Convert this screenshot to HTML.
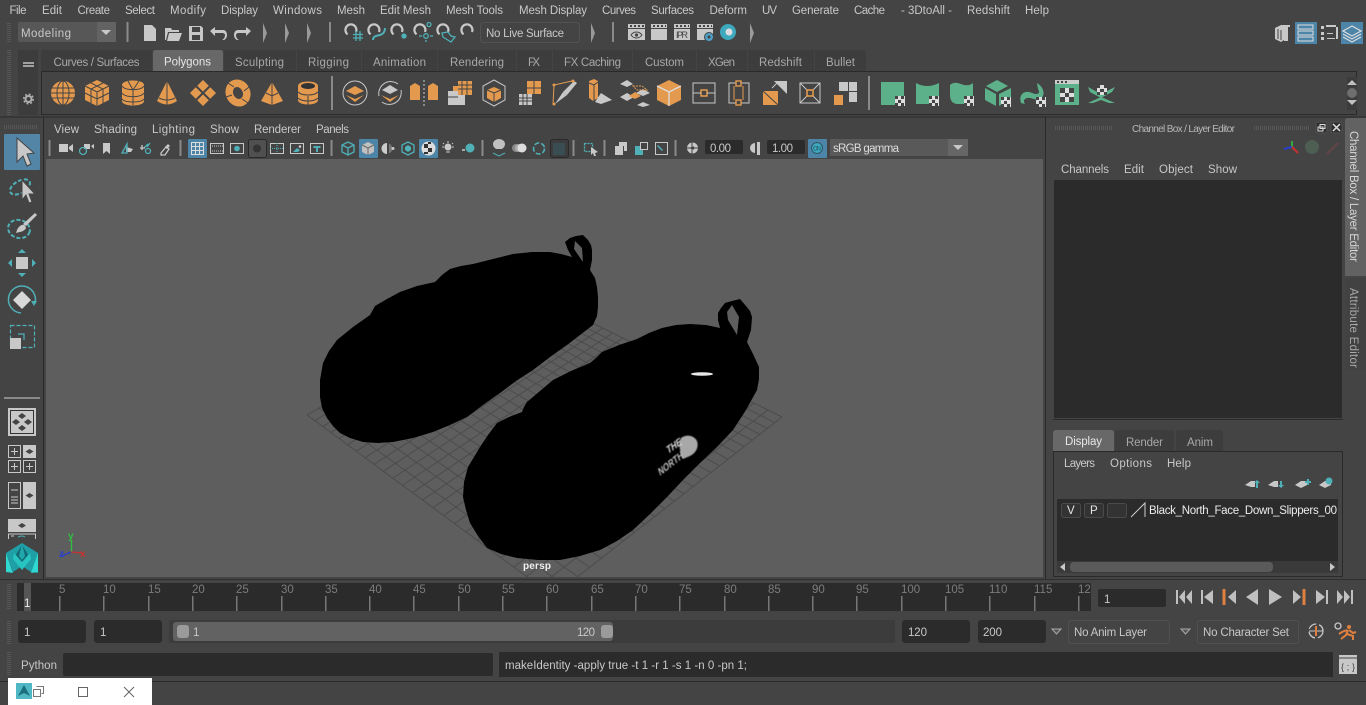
<!DOCTYPE html>
<html><head><meta charset="utf-8"><title>Maya</title>
<style>
html,body{margin:0;padding:0;background:#444;width:1366px;height:705px;overflow:hidden}
svg{display:block;font-family:"Liberation Sans",sans-serif;font-size:11.5px}
.m{fill:#c8c8c8}.d{fill:#a8a8a8}.w{fill:#e6e6e6}.g{fill:#c8c8c8}.o{fill:#e39a4f}.gr{fill:#5cb08a}
.l{stroke:#444;stroke-width:1;fill:none}.t{fill:none;stroke:#4fb0b8;stroke-width:1.6}.s{fill:none;stroke:#c8c8c8;stroke-width:1.3}
.dt{stroke:#6a6a6a;stroke-width:1;stroke-dasharray:1 1;fill:none}
.sep{stroke:#8a8a8a;stroke-width:2}
</style></head><body>
<svg width="1366" height="705" viewBox="0 0 1366 705" xmlns="http://www.w3.org/2000/svg">
<defs><filter id="bl" x="-20%" y="-20%" width="140%" height="140%"><feGaussianBlur stdDeviation="0.6"/></filter></defs>
<rect width="1366" height="705" fill="#444"/>
<!-- menu -->
<g class="m">
<text x="9.5" y="14" textLength="17">File</text><text x="42" y="14" textLength="20">Edit</text><text x="77.5" y="14" textLength="32.5">Create</text><text x="125" y="14" textLength="30">Select</text><text x="170" y="14" textLength="36">Modify</text><text x="221" y="14" textLength="37">Display</text><text x="273" y="14" textLength="49">Windows</text><text x="337" y="14" textLength="28">Mesh</text><text x="380" y="14" textLength="51">Edit Mesh</text><text x="446" y="14" textLength="57">Mesh Tools</text><text x="519" y="14" textLength="68">Mesh Display</text><text x="602" y="14" textLength="34">Curves</text><text x="651" y="14" textLength="43">Surfaces</text><text x="709.5" y="14" textLength="37.5">Deform</text><text x="762" y="14" textLength="15">UV</text><text x="792" y="14" textLength="47">Generate</text><text x="854" y="14" textLength="31">Cache</text><text x="901" y="14" textLength="51">- 3DtoAll -</text><text x="967" y="14" textLength="43">Redshift</text><text x="1025" y="14" textLength="24">Help</text>
</g>
<!-- row 2 -->
<path class="dt" d="M8 23V42M10 23V42M8 50V115M10 50V115"/>
<rect x="18" y="22" width="98" height="20" rx="2" fill="#575757"/><rect x="97" y="22" width="19" height="20" rx="1" fill="#636363"/>
<path d="M101 30h10l-5 5z" fill="#c8c8c8"/>
<text x="21" y="37" class="m" textLength="50">Modeling</text>
<path class="sep" d="M127.500 22V42M330 22V42M613 22V42"/>
<g class="g">
<path d="M144 25h8l4 4v12h-12z"/>
<path d="M165 31v-3h6l1 2h7v2h-11l-2 8h-1zM169 33h13l-3 8h-12z"/>
<path d="M189 26h12l2 2v13h-14zM192 27v5h8v-5zM192 35v5h8v-5z"/>
<path d="M210 31l5-4v3h8c3 0 4 3 4 5s-1 4-3 5h-2c2-1 3-3 3-5 0-1-1-2-3-2h-7v3z"/>
<path d="M251 31l-5-4v3h-8c-3 0-4 3-4 5s1 4 3 5h2c-2-1-3-3-3-5 0-1 1-2 3-2h7v3z"/>
<path d="M263 23l4 10-4 10zM285 23l4 10-4 10zM307 23l4 10-4 10zM591 23l4 10-4 10zM750 23l4 10-4 10z" fill="#9a9a9a"/>
</g>
<g fill="none" stroke="#c8c8c8" stroke-width="2.200">
<path d="M347.600 34.300A5.500 5.500 0 1 1 356 32"/><path d="M370.600 34.300A5.500 5.500 0 1 1 379 32"/><path d="M393.600 34.300A5.500 5.500 0 1 1 402 32"/><path d="M416.600 34.300A5.500 5.500 0 1 1 425 32"/><path d="M439.600 34.300A5.500 5.500 0 1 1 448 32"/><path d="M463.600 34.300A5.500 5.500 0 1 1 472 32"/>
</g>
<g fill="none" stroke="#4fb0b8" stroke-width="1.300">
<path d="M353 34.500h10M353 38h10M356 31v10M360 31v10"/><path d="M373 40c0-4 3-4 7-5 3-1 5-3 5-7" stroke-width="2"/><circle cx="404" cy="36" r="2" fill="#4fb0b8"/><circle cx="429" cy="24.500" r="2"/><circle cx="426" cy="36" r="2.300"/><path d="M419 36h3M430 36h3M426 40v2"/><path d="M442 33l6-1 3 4 4 1-4 5-8-5z"/>
</g>
<rect x="480.500" y="22.500" width="99" height="20" rx="3" fill="#444" stroke="#525252"/>
<text x="486" y="37" class="m" textLength="78">No Live Surface</text>
<g class="g">
<path d="M628 24h17v4h-17zM628 29h17v11h-17z"/><path d="M651 24h16v4h-16zM651 29h16v11h-16z"/><path d="M674 24h16v4h-16zM674 29h16v11h-16z"/><path d="M697 24h16v4h-16zM697 29h16v11h-16z"/>
</g>
<path d="M630 26h2M634 26h2M638 26h2M642 26h2M653 26h2M657 26h2M661 26h2M665 26h1M676 26h2M680 26h2M684 26h2M688 26h1M699 26h2M703 26h2M707 26h2M711 26h1" stroke="#444" stroke-width="2"/>
<path d="M631 35c3-4 8-4 11 0-3 4-8 4-11 0z" fill="none" stroke="#444"/><circle cx="636.500" cy="35" r="1.600" fill="#444"/>
<text x="676" y="38" font-size="9" fill="#444" textLength="12">IPR</text>
<circle cx="709" cy="37" r="4.500" fill="#4fa0c8" stroke="#444"/><circle cx="709" cy="37" r="1.500" fill="#444"/>
<circle cx="728" cy="32" r="8" fill="#3ea9bd"/><circle cx="729" cy="32" r="3.500" fill="#ddd"/>
<!-- top-right layout -->
<path d="M1275 28l6-3h9v2h-2v14h-4v-1l-3 2-6-3z" fill="#c8c8c8"/><path class="l" d="M1278 29v10M1281 30v10"/>
<rect x="1295" y="22" width="22" height="22" fill="#4d85a8"/>
<path d="M1298 25h15v4h-15zM1298 31h15v4h-15zM1298 37h15v4h-15z" fill="none" stroke="#ddd"/>
<path d="M1321 26h3v3h-3zM1321 32h3v3h-3zM1321 37h3v3h-3zM1326 27h12v-2h-12zM1327 33h6v1h-6zM1327 38h8v1h-8zM1336 25h2v14h-2z" fill="#c8c8c8"/>
<rect x="1341" y="22" width="22" height="22" fill="#4d85a8"/>
<path d="M1352 26l9 5-9 5-9-5zM1343 34l9 5 9-5M1343 37l9 5 9-5" fill="none" stroke="#ddd" stroke-width="1.200"/>
<!-- shelf tabs -->
<rect x="18" y="50" width="20" height="65" fill="#3c3c3c"/>
<rect x="23" y="62" width="11" height="2" fill="#a0a0a0"/><rect x="23" y="65" width="11" height="2" fill="#a0a0a0"/>
<circle cx="28.500" cy="99" r="3" fill="none" stroke="#b0b0b0" stroke-width="2"/><circle cx="28.500" cy="99" r="4.800" fill="none" stroke="#b0b0b0" stroke-width="1.400" stroke-dasharray="2 1.770"/>
<g fill="#3d3d3d">
<path d="M41 71V53q0-3 3-3h108v21zM224 71V50h72v21zM297 71V50h64v21zM362 71V50h75v21zM438 71V50h78v21zM517 71V50h35v21zM553 71V50h79v21zM633 71V50h63v21zM697 71V50h50v21zM748 71V50h66v21zM815 71V50h48q3 0 3 3v18z"/>
</g>
<path d="M153 71V53q0-3 3-3h64q3 0 3 3v18z" fill="#686868"/>
<g class="d">
<text x="53.500" y="66" textLength="86">Curves / Surfaces</text><text x="235" y="66" textLength="49">Sculpting</text><text x="308" y="66" textLength="41">Rigging</text><text x="373" y="66" textLength="53">Animation</text><text x="450" y="66" textLength="54">Rendering</text><text x="528" y="66" textLength="12">FX</text><text x="564" y="66" textLength="57">FX Caching</text><text x="645" y="66" textLength="39">Custom</text><text x="708" y="66" textLength="27">XGen</text><text x="759" y="66" textLength="43">Redshift</text><text x="826" y="66" textLength="29">Bullet</text>
</g>
<text x="164" y="65.500" class="w" textLength="47">Polygons</text>
<rect x="41.500" y="71.500" width="1315" height="43" fill="#444" stroke="#2a2a2a"/>
<rect x="1347" y="77" width="10" height="33" fill="#3c3c3c"/>
<path d="M1347 85l5-5 5 5zM1347 100l5 5 5-5z" fill="#c0c0c0"/><circle cx="1352" cy="93" r="5" fill="#6e6e6e"/>
<!-- shelf icons orange -->
<g transform="translate(63 93)"><circle r="12" class="o"/><path class="l" d="M-12 0h24M-11-5h22M-11 5h22"/><ellipse rx="6" ry="12" class="l"/><path class="l" d="M0-12V12"/></g>
<g transform="translate(97 93)"><path class="o" d="M0-13 12-7V7L0 13-12 7V-7z"/><path class="l" d="M-12-7 0-1 12-7M0-1V13M-6-10 6-4V10M6-10-6-4V10M-12 0 0 6 12 0"/></g>
<g transform="translate(133 93)"><path class="o" d="M-11-8C-11-14 11-14 11-8V8C11 14-11 14-11 8z"/><path class="l" d="M-11-7C-8-2 8-2 11-7M-11 0C-8 5 8 5 11 0M-11 6C-8 10 8 10 11 6M0-3V12M0-3-5-12M0-3 6-12"/></g>
<g transform="translate(167 93)"><path class="o" d="M0-12 10 8Q0 15-10 8z"/><path class="l" d="M0-12V12M-8 5Q0 9 8 5"/></g>
<g transform="translate(203 93)"><path class="o" d="M0-13 13 0 0 13-13 0z"/><path d="M-7-7 7 7M7-7-7 7" stroke="#444" stroke-width="2"/></g>
<g transform="translate(238 93)"><ellipse rx="8.500" ry="10" fill="none" stroke="#e39a4f" stroke-width="7.500" transform="rotate(-25)"/><path class="l" d="M-4-6-10-10M4 6 10 10M-6 2-12 4M6-2 11-6"/></g>
<g transform="translate(272 93)"><path class="o" d="M0-11 11 8 0 12-11 8z"/><path class="l" d="M0-11V12M-6 0 0 3 6 0"/></g>
<g transform="translate(308 93)"><path class="o" d="M-10-7C-10-13 10-13 10-7V7C10 13-10 13-10 7z"/><ellipse cy="-7" rx="7" ry="3" fill="#333"/><path class="l" d="M-10-1C-6 3 6 3 10-1M-10 5C-6 9 6 9 10 5M0 3V12"/></g>
<rect x="331" y="76" width="2" height="34" fill="#8a8a8a"/>
<g transform="translate(355 93)"><circle r="12" fill="none" stroke="#c8c8c8"/><path class="o" d="M0-7 9-2 0 2-9-2z"/><path class="o" d="M-9 2 0 6 9 2 0 9z"/></g>
<g transform="translate(390 93)"><path d="M-11 3A12 12 0 0 1 8-9M11-3A12 12 0 0 1-8 9" fill="none" stroke="#c8c8c8"/><path class="g" d="M0-8 8-3 0 1-8-3z"/><path class="o" d="M-9 2 0 6 9 2 0 9z"/></g>
<g transform="translate(424 93)"><path class="o" d="M-14-7-9-10-4-7V7H-14zM4-7 9-10 14-7V7H4z"/><path d="M0-13V13" stroke="#ccc" stroke-dasharray="2 2"/></g>
<g transform="translate(460 93)"><path class="o" d="M-2-12H12V2H-2z"/><path class="o" d="M-7-7H-2V-2H-7z"/><path class="g" d="M-12-2H-2V12H-12zM-2 2H5V12H-2z"/><path class="l" d="M-2-8H12M-2-4H12M2-12V2M7-12V2M-12 4H-2"/></g>
<g transform="translate(494 93)"><path d="M0-13 11-7V7L0 13-11 7V-7z" fill="none" stroke="#c8c8c8"/><path class="o" d="M0-6 7-3V5L0 9-7 5V-3z"/><path class="l" d="M-7-3 0 0 7-3M0 0V9"/></g>
<g transform="translate(530 93)"><path class="o" d="M-3-12H11V1H-3z"/><path class="o" d="M-3-3H2V1H-3z"/><path d="M4-12V1M-3-5H11" stroke="#444"/><path d="M-11 1H2V12H-11z" fill="#c8c8c8"/><path d="M-11 5H2M-11 8H2M-7 1V12M-3 1V12" stroke="#444"/></g>
<g transform="translate(565 93)"><path d="M-12 12-11-8 7-12" fill="none" stroke="#e39a4f"/><path class="g" d="M12-10 2 2-2-1 9-12z"/><path class="g" d="M-10 11 2 2-2-1z"/><circle cx="-11" cy="-8" r="1.500" class="o"/><circle cx="-11" cy="11" r="1.500" class="o"/><circle cx="8" cy="-12" r="1.500" class="o"/></g>
<g transform="translate(600 93)"><path class="o" d="M-11-12-6-14-2-12V5L-7 8-11 5z"/><path class="l" d="M-11-10-6-8-2-11M-6-8V8"/><path class="g" d="M1 0 12 7 1 11-5 9z"/></g>
<g transform="translate(635 93)"><path class="g" d="M-8-13-2-9-8-6-15-9zM8-4 15 0 8 3 1 0zM-8 0-1 4-8 8-15 4zM8 9 15 12 8 14 2 12z"/><path class="o" d="M0-1 6 3 0 6-6 3z"/><path d="M-2-7H7L12-3H2z" fill="none" stroke="#e39a4f" stroke-dasharray="2 1"/></g>
<g transform="translate(669 93)"><path class="o" d="M0-13 12-7V7L0 13-12 7V-7z"/><path d="M-12-7 0-1 12-7M0-1V13" stroke="#ddd" stroke-width="1.300" fill="none"/></g>
<g transform="translate(704 93)"><rect x="-11" y="-10" width="22" height="20" fill="none" stroke="#c8c8c8"/><rect x="-3" y="-3" width="6" height="6" fill="none" stroke="#e39a4f" stroke-width="1.500"/><path d="M-11 0H-3M3 0H11" stroke="#c8c8c8"/></g>
<g transform="translate(739 93)"><rect x="-10" y="-10" width="20" height="20" fill="none" stroke="#c8c8c8"/><rect x="-3" y="-12" width="5" height="5" fill="#444" stroke="#e39a4f" stroke-width="1.400"/><rect x="-3" y="7" width="5" height="5" fill="#444" stroke="#e39a4f" stroke-width="1.400"/><path d="M-5-7V7M4-7V7" stroke="#e39a4f"/></g>
<g transform="translate(775 93)"><path class="o" d="M-12-2V12H3V-2z"/><path d="M-12-2 3 12" stroke="#444"/><path class="g" d="M-1-12H12V1z"/><path d="M-3-5 3-11" stroke="#c8c8c8"/></g>
<g transform="translate(810 93)"><rect x="-10" y="-10" width="20" height="20" fill="none" stroke="#c8c8c8"/><path d="M-10-10-3-3M10-10 3-3M-10 10-3 3M10 10 3 3" stroke="#c8c8c8"/><rect x="-3" y="-3" width="6" height="6" fill="none" stroke="#e39a4f" stroke-width="1.600"/></g>
<g transform="translate(845 93)"><path class="g" d="M-6-11H3V-2H-6zM4-11H12V-2H4zM4-1H12V9H4z"/><path class="o" d="M-11 2H-2V12H-11z"/></g>
<rect x="868" y="76" width="2" height="34" fill="#8a8a8a"/>
<!-- green -->
<g class="gr"><path d="M881 82h23v23h-23z"/><path d="M916 83q11 6 23 0v21h-23z"/><path d="M950 85q4-4 11-1 7 3 12-1v14c0 6-3 7-8 7h-7c-6 0-8-4-8-9z"/><path d="M997 80l11 6-11 6-11-6z"/><path d="M985 88l11 6v12l-11-6zM1011 88l-12 6v12l12-6z"/><path d="M1021 103c-3-10 5-13 11-10 5 2 9 1 6-4l-1-6c7 4 9 13 3 16-5 2-8-2-13-1-3 1-4 3-2 6z"/><path d="M1055 84h24v21h-24z"/><path d="M1088 87l13 7 14-7-3 5-11 6-11-6zM1088 103l13-6 14 6h-6l-8-3-8 3z"/></g>
<path d="M1055 80h24v4h-24z" fill="#ccc"/><path d="M1057 81h2v2h-2zM1061 81h2v2h-2zM1065 81h2v2h-2z" fill="#444"/>
<g fill="#ddd"><path d="M895 96h10v10h-10z"/><path d="M929 96h10v10h-10zM964 96h10v10h-10zM1001 97h10v10h-10zM1036 97h10v10h-10zM1060 88h14v14h-14zM1097 85h10v10h-10z"/></g>
<g fill="#444"><path d="M895 96h3v3h-3zM901 96h3v3h-3zM898 100h3v3h-3zM895 103h3v3h-3zM901 103h3v3h-3zM929 96h3v3h-3zM935 96h3v3h-3zM932 100h3v3h-3zM929 103h3v3h-3zM935 103h3v3h-3zM964 96h3v3h-3zM970 96h3v3h-3zM967 100h3v3h-3zM964 103h3v3h-3zM970 103h3v3h-3zM1001 97h3v3h-3zM1007 97h3v3h-3zM1004 101h3v3h-3zM1001 104h3v3h-3zM1007 104h3v3h-3zM1036 97h3v3h-3zM1042 97h3v3h-3zM1039 101h3v3h-3zM1036 104h3v3h-3zM1042 104h3v3h-3zM1060 88h5v5h-5zM1069 88h5v5h-5zM1065 93h4v4h-4zM1060 97h5v5h-5zM1069 97h5v5h-5zM1097 85h3v3h-3zM1104 85h3v3h-3zM1100 89h4v3h-4zM1097 92h3v3h-3zM1104 92h3v3h-3z"/></g>
<!-- panel lines -->
<rect x="0" y="116.500" width="1366" height="1" fill="#2a2a2a"/>
<rect x="43" y="117" width="1" height="463" fill="#2a2a2a"/><rect x="1045" y="117" width="1" height="463" fill="#2a2a2a"/>
<!-- viewport menu -->
<path class="dt" d="M4 126H38M4 128H38"/>
<g class="m"><text x="54" y="133" textLength="25">View</text><text x="94" y="133" textLength="43">Shading</text><text x="152" y="133" textLength="43">Lighting</text><text x="210" y="133" textLength="29">Show</text><text x="254" y="133" textLength="47">Renderer</text><text x="316" y="133" textLength="33">Panels</text></g>
<!-- view toolbar -->
<path class="sep" d="M49.500 140V156M180.500 140V156M331.500 140V156M482.500 140V156M573.500 140V156M604.500 140V156M675.500 140V156"/>
<rect x="188" y="139" width="19" height="19" rx="1" fill="#4d85a8"/><rect x="359" y="139" width="19" height="19" rx="1" fill="#4d85a8"/><rect x="419" y="139" width="19" height="19" rx="1" fill="#4d85a8"/>
<rect x="248.500" y="139.500" width="18" height="18" rx="2" fill="#505050" stroke="#2a2a2a"/><rect x="550.500" y="139.500" width="18" height="18" rx="2" fill="#3c3c3c" stroke="#2a2a2a"/>
<g fill="#c8c8c8">
<path d="M59 144h9v8h-9zM69 147l4-3v8l-4-3z"/><path d="M84 144h6v5h-6zM91 146l3-2v5z"/><path d="M103 143h7v11l-3.500-3-3.500 3z"/><path d="M119 155h14M126 147l7 2-2 3h-5z"/>
</g>
<g fill="none" stroke="#4fb0b8" stroke-width="1.300"><circle cx="83" cy="151" r="3.500"/><circle cx="148" cy="151" r="2.500"/><path d="M144 148l4-4M147 147l3-4" /><path d="M122 153l5-9v9z"/></g>
<path d="M140 148h5M142 145v5M161 153l5-6 3 2-4 6h-4z" fill="none" stroke="#c8c8c8" stroke-width="1.300"/>
<path d="M168 144l2 2-3 3-2-2z" fill="#c8c8c8"/>
<rect x="191.500" y="142.500" width="12" height="12" fill="none" stroke="#ddd"/><path d="M191 146.500h12M191 150.500h12M195.500 142v12M199.500 142v12" stroke="#ddd"/>
<rect x="210.500" y="143.500" width="13" height="10" fill="none" stroke="#c8c8c8"/><path d="M210 146h14M210 151h14" stroke="#c8c8c8" stroke-dasharray="1 1"/>
<rect x="230.500" y="143.500" width="13" height="10" fill="none" stroke="#c8c8c8"/><circle cx="237" cy="148.500" r="2.800" fill="#4fb0b8"/>
<circle cx="257" cy="148.500" r="4" fill="#333"/>
<rect x="270.500" y="143.500" width="13" height="10" fill="none" stroke="#c8c8c8"/><path d="M277 143v10M270 148.500h14" stroke="#4fb0b8" stroke-dasharray="1 1"/>
<rect x="290.500" y="143.500" width="13" height="10" fill="none" stroke="#c8c8c8"/><path d="M293 152l4-4 3 2-2 2z" fill="#4fb0b8"/><circle cx="300" cy="146.500" r="1.300" fill="#ccc"/>
<rect x="310.500" y="143.500" width="13" height="10" fill="none" stroke="#c8c8c8"/><path d="M313.500 146h7v2h-2.500v4h-2v-4h-2.500z" fill="#4fb0b8"/>
<path d="M348 142l6 3v7l-6 3-6-3v-7zM342 145l6 3 6-3M348 148v7" fill="none" stroke="#4fb0b8" stroke-width="1.300"/>
<path d="M368 142l6 3v7l-6 3-6-3v-7z" fill="#c0c0c0"/><path d="M362 145l6 3 6-3M368 148v7" fill="none" stroke="#666"/>
<path d="M387 143a5.500 5.500 0 0 0 0 11z" fill="#ccc"/><path d="M389 143.500a5.500 5.500 0 0 1 0 10z" fill="#777"/><circle cx="393" cy="148.500" r="1.500" fill="#ccc"/>
<path d="M408 142l6 3v7l-6 3-6-3v-7z" fill="none" stroke="#4fb0b8" stroke-width="1.300"/><path d="M408 145l3 2v3l-3 2-3-2v-3z" fill="#4fb0b8"/>
<circle cx="428.500" cy="148.500" r="7" fill="#ddd"/><path d="M424 144h4v4h-4zM428 148h4v4h-4zM428 142h3v2h-3zM424 152h4v2h-4z" fill="#333"/>
<circle cx="448" cy="147" r="3.500" fill="#c8c8c8"/><path d="M446 152h4M448 141v2M442 147h2M452 147h2M443 143l1 1M453 143l-1 1" stroke="#c8c8c8"/>
<path d="M462 150h3" stroke="#aaa" stroke-width="2"/><circle cx="470" cy="148" r="4.500" fill="#4fb0b8"/>
<path d="M493 144a6 5 0 0 1 12 0c0 3-2 4-3 5h-6c-1-1-3-2-3-5z" fill="#c0c0c0"/><path d="M493 153l6 3 6-3" fill="none" stroke="#4fb0b8"/>
<circle cx="516" cy="148" r="4" fill="#888"/><circle cx="519" cy="148" r="4" fill="#aaa"/><circle cx="522" cy="148" r="4.500" fill="#ddd"/>
<circle cx="539" cy="148.500" r="5.500" fill="none" stroke="#4fb0b8" stroke-width="1.600" stroke-dasharray="5 2"/>
<path d="M553 143h12v12h-12z" fill="#3a4d52"/>
<rect x="584.500" y="143.500" width="8" height="8" fill="none" stroke="#4fb0b8" stroke-dasharray="2 1" stroke-width="1.300"/><path d="M591 147l7 5-3 1 1 3-2 0-1-3-2 2z" fill="#c8c8c8"/>
<path d="M615 146h8v9h-8zM619 142h8v9h-3v-5h-5z" fill="#c8c8c8"/>
<path d="M635 146h8v9h-8z" fill="#4fb0b8"/><rect x="640.500" y="142.500" width="7" height="7" fill="#444" stroke="#c8c8c8"/>
<rect x="655.500" y="142.500" width="12" height="12" fill="none" stroke="#c8c8c8"/><path d="M658 145l5 5-1 1-5-5z" fill="#4fb0b8"/>
<circle cx="692.500" cy="148" r="5.500" fill="#c8c8c8"/><circle cx="692.500" cy="148" r="1.800" fill="#444"/><path d="M692 142v4M698 148h-4M692 154v-4M687 148h4" stroke="#444"/>
<rect x="705" y="140" width="38" height="14" rx="2" fill="#2b2b2b"/><text x="710" y="152" class="m" textLength="21">0.00</text>
<path d="M755 143a5 5 0 0 0 0 10z" fill="#c8c8c8"/><path d="M757 142h3v13h-3z" fill="#c8c8c8"/>
<rect x="767" y="140" width="38" height="14" rx="2" fill="#2b2b2b"/><text x="772" y="152" class="m" textLength="21">1.00</text>
<rect x="808" y="139" width="19" height="19" rx="1" fill="#4d85a8"/><circle cx="817" cy="148" r="5.500" fill="#3ea9bd" stroke="#2f5468"/><text x="813" y="150.500" font-size="6" fill="#24505f" textLength="8">ON</text>
<rect x="830" y="139" width="120" height="17" rx="1" fill="#595959"/><rect x="948" y="139" width="20" height="17" rx="1" fill="#666"/><path d="M953 145h10l-5 5z" fill="#c8c8c8"/>
<text x="833" y="152" fill="#dcdcdc" textLength="66">sRGB gamma</text>
<!-- viewport -->
<rect x="46" y="159" width="997" height="418" fill="#5e5e5e"/>
<clipPath id="vp"><rect x="46" y="159" width="997" height="418"/></clipPath>
<g clip-path="url(#vp)">
<g id="grid" stroke="#4c4c4c" stroke-width="1" fill="none"></g>
<polygon fill="#000" points="320,397 320,380 323,363 329,351 337,340 353,327 370,315 375,306 387,299 400,292 417,286 435,282 442,275 450,269 461,266 473,264 493,259 513,254 532,252 550,252 561,254 572,257 568,250 565,242 570,238 576,236 583,235 588,240 591,245 592,250 592,260 590,270 595,278 597,287 598,297 598,307 597,316 593,325 580,335 567,345 550,357 533,370 516,381 500,393 483,405 467,417 450,425 433,432 413,438 393,442 378,443 363,442 350,438 340,433 333,426 327,418 322,408"/>
<polygon fill="#5e5e5e" points="575,241 582,248 583,262 574,249"/>
<polygon fill="#000" points="463,497 464,482 468,467 474,457 480,447 488,435 497,423 509,417 522,412 524,407 527,402 540,391 553,380 571,371 590,363 596,358 602,352 619,345 637,339 649,333 662,328 676,325 690,324 706,325 720,328 718,320 718,313 721,308 725,303 732,301 740,299 746,306 750,311 752,317 751,330 747,342 753,354 759,367 759,379 757,390 746,410 733,430 717,447 700,463 683,480 667,497 650,514 633,530 617,541 600,550 580,556 560,560 538,560 517,558 501,554 487,548 478,536 470,523 466,510"/>
<polygon fill="#5e5e5e" points="732,305 739,317 737,335 728,320 727,312"/>
<ellipse cx="702" cy="374" rx="11" ry="1.800" fill="#e8e8e8"/>
<g filter="url(#bl)">
<path d="M681 438C686 434 694 435 697 441C699 447 696 453 690 456L683 459C680 452 678 444 681 438Z" fill="#a8a8a8"/>
<text transform="translate(668 454) rotate(-35) skewX(-20)" font-size="10" font-weight="bold" fill="#e0e0e0" textLength="17" lengthAdjust="spacingAndGlyphs">THE</text>
<text transform="translate(660 476) rotate(-38) skewX(-18)" font-size="10" font-weight="bold" fill="#c0c0c0" textLength="30" lengthAdjust="spacingAndGlyphs">NORTH</text>
</g>
<text x="523" y="569" font-size="10" font-weight="bold" fill="#eee" textLength="28">persp</text>
</g>
<!-- axis -->
<path d="M71.500 552V540" stroke="#2fc040" stroke-width="1.300"/><path d="M71 552 82 553" stroke="#c83030" stroke-width="1.300"/><path d="M71 552 62 556" stroke="#2a3fd0" stroke-width="1.300"/>
<text x="68" y="539" font-size="10" font-weight="bold" fill="#2fc040">y</text><text x="80" y="557" font-size="10" font-weight="bold" fill="#c83030">x</text><text x="59" y="557" font-size="10" font-weight="bold" fill="#2a3fd0">z</text>
<!-- left toolbar -->
<rect x="4" y="134" width="36" height="36" rx="1" fill="#5285a6"/>
<path d="M17 138 17 162 23 156 27 166 31 164 27 154 34 153Z" fill="#c8c8c8" stroke="#444"/>
<ellipse cx="20" cy="187" rx="11" ry="6" transform="rotate(-30 20 187)" fill="none" stroke="#4fb0b8" stroke-width="2" stroke-dasharray="4 2"/>
<path d="M22 180 22 200 26 195 29 203 32 202 29 194 35 194Z" fill="#c8c8c8" stroke="#444"/>
<ellipse cx="19" cy="229" rx="11" ry="9" transform="rotate(15 19 229)" fill="none" stroke="#4fb0b8" stroke-width="2" stroke-dasharray="4 2"/>
<path d="M35 213 37 215 26 226 23 224ZM17 230C20 224 25 223 26 228 24 232 19 232 16 233Z" fill="#c8c8c8"/>
<rect x="16" y="257" width="12" height="12" fill="#c8c8c8"/>
<path d="M22 249l4 4h-8zM22 277l4-4h-8zM8 263l4-4v8zM36 263l-4-4v8z" fill="#4fb0b8"/>
<path d="M35 303A13.500 13.500 0 1 0 21 313" fill="none" stroke="#4fb0b8" stroke-width="1.500"/><path d="M31 301h6l-3 5z" fill="#4fb0b8"/>
<path d="M22 291l9 9-9 9-9-9z" fill="#d8d8d8"/>
<rect x="10.500" y="325.500" width="24" height="22" fill="none" stroke="#4fb0b8" stroke-dasharray="4 2" stroke-width="1.200"/>
<rect x="10" y="338" width="11" height="11" fill="#c8c8c8"/><path d="M18 334h6v6" fill="none" stroke="#4fb0b8" stroke-width="1.200"/>
<rect x="4" y="397" width="36" height="2" fill="#8a8a8a"/>
<rect x="8" y="408" width="28" height="28" fill="#c8c8c8"/><rect x="10.500" y="410.500" width="23" height="23" fill="#c8c8c8" stroke="#333"/>
<path d="M22 413l4 3-4 3-4-3zM16 419l4 3-4 3-4-3zM28 419l4 3-4 3-4-3zM22 425l4 3-4 3-4-3z" fill="#444"/>
<g fill="none" stroke="#c8c8c8"><rect x="8.500" y="445.500" width="12" height="12"/><rect x="8.500" y="460.500" width="12" height="12"/><rect x="23.500" y="460.500" width="12" height="12"/><path d="M11 451.500h7M14.500 448v7M11 466.500h7M14.500 463v7M26 466.500h7M29.500 463v7"/><rect x="8.500" y="482.500" width="12" height="26"/></g>
<rect x="23" y="445" width="13" height="13" fill="#c8c8c8"/><path d="M29.500 449l4 2.500-4 2.500-4-2.500z" fill="#444"/>
<rect x="23" y="482" width="13" height="27" fill="#c8c8c8"/><path d="M29.500 493l4 2.500-4 2.500-4-2.500z" fill="#444"/>
<path d="M11 490h7M11 497h7M11 500h7M11 503h7" stroke="#c8c8c8"/>
<rect x="8" y="519" width="28" height="13" fill="#c8c8c8"/><path d="M22 523l4 2.500-4 2.500-4-2.500z" fill="#444"/>
<path d="M8.500 539V534h27v5" fill="none" stroke="#c8c8c8"/><path d="M11 536h3" stroke="#c8c8c8"/><path d="M18 537q4-2 7 0" stroke="#4fb0b8" fill="none"/>
<!-- maya logo -->
<path d="M6 553 22 543 38 553 38 573 31 572 22 566 13 572Z" fill="#1f9fa6"/>
<path d="M22 545 15 556 22 565 29 556Z" fill="#146a74"/>
<path d="M6 553 13 573 6 572Z" fill="#2fd8d0"/><path d="M38 553 31 573 38 572Z" fill="#2fd8d0"/>
<path d="M22 562 14 553 13 559 22 570 31 559 30 553Z" fill="#28c4c0"/>
<path d="M22 544 19 556 22 560 25 556Z" fill="#20a8ac"/>
<!-- right side panel -->
<path class="dt" d="M1055 127H1113M1055 129H1113M1254 127H1309M1254 129H1309"/>
<text x="1132" y="132" font-size="10" fill="#b8b8b8" textLength="103">Channel Box / Layer Editor</text>
<rect x="1316" y="122" width="11" height="11" rx="2" fill="#2f2f2f" stroke="#505050"/><path d="M1320 124.500h5v4h-5zM1318 127h5v4h-5z" fill="none" stroke="#ddd"/>
<rect x="1331" y="122" width="11" height="11" rx="2" fill="#2f2f2f" stroke="#505050"/><path d="M1333 124l7 7M1340 124l-7 7" stroke="#ddd" stroke-width="1.500"/>
<path d="M1292 147v-6" stroke="#36a84a" stroke-width="2"/><path d="M1292 147l-8 2" stroke="#2a3fd0" stroke-width="2"/><path d="M1292 147l6 6" stroke="#c83030" stroke-width="2"/>
<circle cx="1312" cy="147" r="7" fill="#4d5e52"/><path d="M1327 154l11-11" stroke="#624545" stroke-width="2"/>
<g class="m"><text x="1061" y="173" textLength="48">Channels</text><text x="1124" y="173" textLength="20">Edit</text><text x="1159" y="173" textLength="34">Object</text><text x="1208" y="173" textLength="29">Show</text></g>
<rect x="1054" y="180" width="288" height="238" fill="#2b2b2b"/>
<path d="M1053 419.500H1343" stroke="#2a2a2a"/>
<path d="M1345 276V121q0-3 3-3h18v158z" fill="#626262"/>
<path d="M1345 278h21v92h-21z" fill="#424242"/>
<text transform="translate(1350 131) rotate(90)" fill="#d8d8d8" textLength="131">Channel Box / Layer Editor</text>
<text transform="translate(1350 288) rotate(90)" fill="#a8a8a8" textLength="80">Attribute Editor</text>
<!-- layer editor -->
<path d="M1053 451V433q0-3 3-3h55q3 0 3 3v18z" fill="#686868"/>
<path d="M1115 451V433q0-3 3-3h53q3 0 3 3v18zM1176 451V433q0-3 3-3h41q3 0 3 3v18z" fill="#3d3d3d"/>
<text x="1065" y="445" class="w" textLength="37">Display</text>
<text x="1126" y="446" class="d" textLength="37">Render</text><text x="1187" y="446" class="d" textLength="26">Anim</text>
<rect x="1053.500" y="451.500" width="289" height="125" fill="#444" stroke="#2a2a2a"/>
<g class="m"><text x="1064" y="467" textLength="31">Layers</text><text x="1110" y="467" textLength="42">Options</text><text x="1167" y="467" textLength="24">Help</text></g>
<g fill="#c8c8c8"><path d="M1245 485l6-4h4v6h-4zM1268 485l6-4h4v6h-4zM1295 485l6-4h6v4l-6 3zM1319 485l6-4h6v4l-6 3z"/></g>
<g fill="#4fb0b8"><path d="M1257 480l3 3h-2v5h-2v-5h-2zM1281 488l3-3h-2v-4h-2v4h-2zM1305 481h2v-2h2v2h2v2h-2v2h-2v-2h-2z"/><circle cx="1329" cy="481" r="3.500"/></g>
<rect x="1057" y="499" width="281" height="74" fill="#2b2b2b"/>
<rect x="1061.500" y="503.500" width="19" height="14" rx="2" fill="#333" stroke="#4a4a4a"/><rect x="1084.500" y="503.500" width="19" height="14" rx="2" fill="#333" stroke="#4a4a4a"/><rect x="1107.500" y="503.500" width="19" height="14" rx="2" fill="#333" stroke="#4a4a4a"/>
<text x="1067" y="514" class="w" textLength="8">V</text><text x="1090" y="514" class="w" textLength="8">P</text>
<path d="M1131 517 1145 503V517" fill="none" stroke="#d0d0d0"/>
<text x="1149" y="514" fill="#ececec" textLength="188">Black_North_Face_Down_Slippers_00</text>
<rect x="1057" y="561" width="281" height="12" fill="#3a3a3a"/>
<rect x="1070" y="562" width="203" height="10" rx="4" fill="#5a5a5a"/>
<path d="M1065 563v8l-5-4zM1330 563v8l5-4z" fill="#c8c8c8"/>
<!-- timeline -->
<rect x="0" y="579" width="1366" height="1" fill="#2f2f2f"/>
<path class="dt" d="M8 584V610M10 584V610M8 621V644M10 621V644M8 652V676M10 652V676"/>
<rect x="17" y="583" width="1074" height="28" fill="#2b2b2b"/>
<rect x="24" y="583" width="7" height="28" fill="#555"/>
<text x="24" y="607" fill="#eee">1</text>
<g id="tl" font-size="11.5" fill="#7c7c7c"></g>
<rect x="1098" y="589" width="68" height="18" rx="2" fill="#2b2b2b"/><text x="1104" y="603" class="m">1</text>
<g fill="#c0c0c0">
<path d="M1176 590h2v14h-2zM1185 590v14l-6-7zM1192 590v14l-6-7z"/>
<path d="M1201 590h2v14h-2zM1213 590v14l-9-7z"/>
<path d="M1236 590v14l-8-7z"/>
<path d="M1246 597l12-8v16z"/>
<path d="M1269 589l13 8-13 8z"/>
<path d="M1293 590l8 7-8 7z"/>
<path d="M1316 590l9 7-9 7zM1326 590h2v14h-2z"/>
<path d="M1337 590l6 7-6 7zM1344 590l6 7-6 7zM1351 590h2v14h-2z"/>
</g>
<path d="M1224 589v16" stroke="#e08040" stroke-width="3"/><path d="M1304 589v16" stroke="#e08040" stroke-width="3"/>
<!-- range -->
<rect x="18" y="620" width="68" height="23" rx="3" fill="#2b2b2b"/><rect x="94" y="620" width="68" height="23" rx="3" fill="#2b2b2b"/>
<text x="24" y="636" class="m">1</text><text x="100" y="636" class="m">1</text>
<rect x="169" y="620" width="726" height="23" rx="2" fill="#3c3c3c"/>
<rect x="173" y="622" width="440" height="19" rx="3" fill="#626262"/>
<rect x="177" y="625" width="12" height="13" rx="3" fill="#9a9a9a"/><rect x="601" y="625" width="12" height="13" rx="3" fill="#9a9a9a"/>
<text x="193" y="636" class="m">1</text><text x="577" y="636" class="m" textLength="18">120</text>
<rect x="902" y="620" width="68" height="23" rx="3" fill="#2b2b2b"/><rect x="978" y="620" width="68" height="23" rx="3" fill="#2b2b2b"/>
<text x="908" y="636" class="m" textLength="19">120</text><text x="983" y="636" class="m" textLength="19">200</text>
<path d="M1052 629h9l-4.500 5z" fill="#555" stroke="#aaa"/><path d="M1181 629h9l-4.500 5z" fill="#555" stroke="#aaa"/>
<rect x="1068.500" y="620.500" width="101" height="23" rx="2" fill="#444" stroke="#505050"/><rect x="1197.500" y="620.500" width="101" height="23" rx="2" fill="#444" stroke="#505050"/>
<text x="1074" y="636" class="m" textLength="73">No Anim Layer</text><text x="1203" y="636" class="m" textLength="86">No Character Set</text>
<circle cx="1316" cy="631" r="7" fill="none" stroke="#c8c8c8" stroke-width="1.300" stroke-dasharray="9 3"/><path d="M1309 631h14" stroke="#c8c8c8"/><path d="M1316 626v10" stroke="#e08040" stroke-width="2"/>
<circle cx="1338" cy="626" r="3" fill="none" stroke="#c8c8c8" stroke-width="1.300"/>
<circle cx="1349" cy="627" r="2" fill="#e08040"/><path d="M1347 630l-5 2-3 2M1348 630l-2 5-5 4M1347 634l6 2 0 4M1349 630l4 3 3-1" fill="none" stroke="#e08040" stroke-width="2"/>
<!-- command -->
<text x="21" y="669" class="m" textLength="36">Python</text>
<rect x="63" y="653" width="430" height="23" rx="2" fill="#2b2b2b"/><rect x="499" y="652" width="834" height="25" fill="#2b2b2b"/>
<text x="505" y="669" class="m" textLength="242">makeIdentity -apply true -t 1 -r 1 -s 1 -n 0 -pn 1;</text>
<rect x="1339" y="655" width="18" height="19" fill="#c8c8c8"/><path d="M1339 658h18" stroke="#444"/><text x="1341" y="670" font-size="9" fill="#444" textLength="14">{;}</text>
<rect x="0" y="681" width="1366" height="1" fill="#2a2a2a"/>
<!-- window stub -->
<rect x="8" y="678" width="144" height="27" fill="#fff"/>
<rect x="16" y="683" width="16" height="16" fill="#4fb8c4"/><path d="M18 696 24 685 30 696 24 693z" fill="#1b6f7c"/>
<path d="M36.500 686.500h7v7h-2M33.500 689.500h7v7h-7z" fill="#fff" stroke="#777"/>
<rect x="78.500" y="687.500" width="9" height="9" fill="none" stroke="#666"/>
<path d="M124 687l10 10M134 687l-10 10" stroke="#666"/>
</svg>
<script>
(function(){
var ns="http://www.w3.org/2000/svg",g=document.getElementById('grid');
var T=[522,288],R=[782,417],B=[553,596],L=[307,415],n=24;
function lerp(a,b,t){return[a[0]+(b[0]-a[0])*t,a[1]+(b[1]-a[1])*t];}
function pr(t){return t*0.75/(1-0.25*t);}
for(var i=0;i<=n;i++){var t=i/n,u=pr(t);
 var a=lerp(T,R,u),b=lerp(L,B,u),c=lerp(T,L,u),d=lerp(R,B,u);
 [[a,b],[c,d]].forEach(function(p){var e=document.createElementNS(ns,'line');
 e.setAttribute('x1',p[0][0]);e.setAttribute('y1',p[0][1]);e.setAttribute('x2',p[1][0]);e.setAttribute('y2',p[1][1]);g.appendChild(e);});}
var tl=document.getElementById('tl');
for(var f=5;f<=120;f+=5){var x=59+(f-5)*8.861;
 var r=document.createElementNS(ns,'rect');r.setAttribute('x',Math.round(x));r.setAttribute('y',596);r.setAttribute('width',1.500);r.setAttribute('height',15);r.setAttribute('fill','#777');tl.appendChild(r);
 var s=document.createElementNS(ns,'text');s.setAttribute('x',Math.round(x));s.setAttribute('y',593);s.textContent=f==120?'12':f;tl.appendChild(s);}
})();
</script>
</body></html>
